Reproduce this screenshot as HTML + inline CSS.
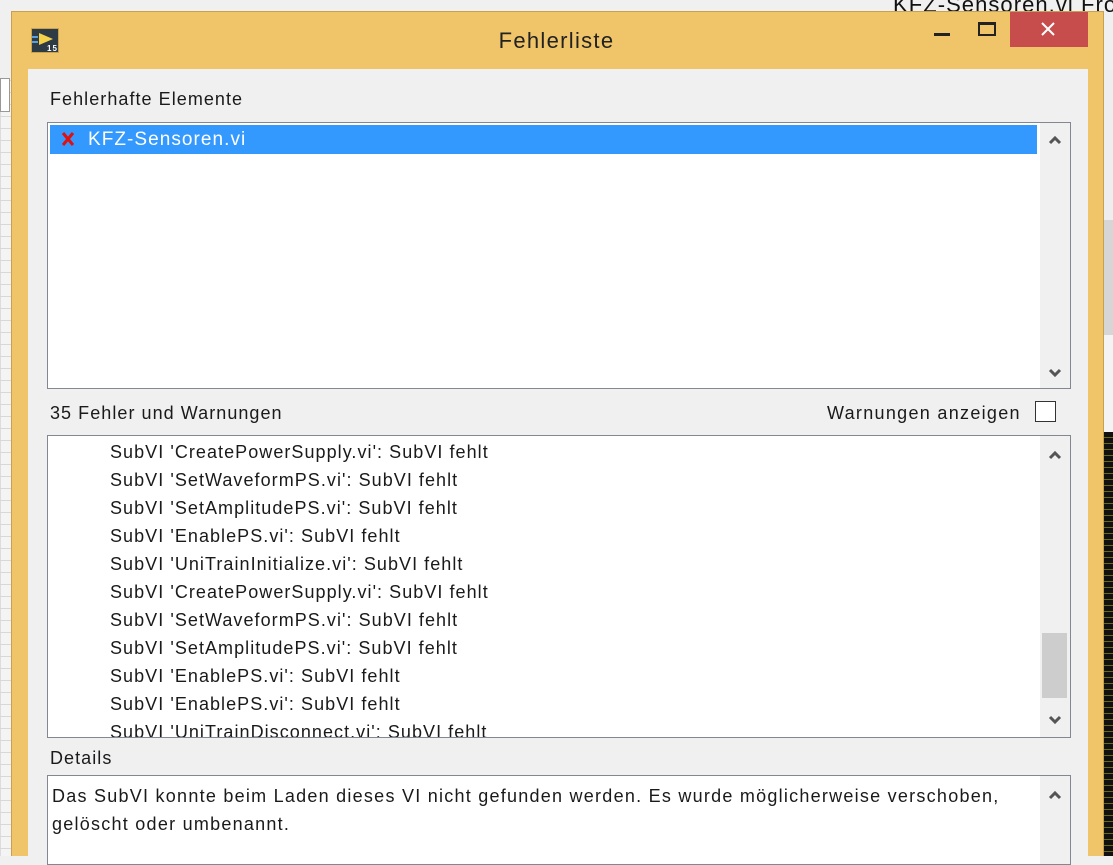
<!DOCTYPE html>
<html><head><style>
*{margin:0;padding:0;box-sizing:border-box}
body{width:1113px;height:856px;overflow:hidden;position:relative;background:#f0f0f0;font-family:"Segoe UI","Liberation Sans",sans-serif;color:#1a1a1a;letter-spacing:1.05px}
.abs{position:absolute}
.grid{background-color:#f4f4f4;background-image:linear-gradient(#d8d8d8 1px,transparent 1px),linear-gradient(90deg,#dcdcdc 1px,transparent 1px);background-size:12px 12px}
.box{position:absolute;background:#fff;border:1px solid #828790}
.sb{position:absolute;top:0;bottom:0;right:0;width:30px;background:#f0f0f0}
.chev{position:absolute;left:8px;width:14px;height:10px}
.row{position:absolute;left:62px;font-size:18px;white-space:nowrap;line-height:28px}
.lbl{position:absolute;font-size:18px;white-space:nowrap}
</style></head><body>
<div class="abs grid" style="left:0;top:80px;width:12px;height:776px"></div>
<div class="abs" style="left:0;top:78px;width:10px;height:34px;border:1px solid #999;background:#fff"></div>
<div class="abs" style="left:893px;top:-8px;font-size:22px;color:#111;white-space:nowrap">KFZ-Sensoren.vi Fro</div>
<div class="abs" style="left:1104px;top:70px;width:9px;height:150px;background:#eee"></div>
<div class="abs" style="left:1104px;top:220px;width:9px;height:115px;background:#d6d6d6"></div>
<div class="abs" style="left:1104px;top:335px;width:9px;height:97px;background:#f4f4f4"></div>
<div class="abs" style="left:1104px;top:432px;width:9px;height:424px;background:#111;background-image:repeating-linear-gradient(#111 0 5px,#6a6a10 5px 6px)"></div>
<!-- window -->
<div class="abs" style="left:11px;top:11px;width:1093px;height:845px;background:#f0c468;border:1px solid #c9a050;border-bottom:none"></div>
<div class="abs" style="left:31px;top:28px;width:28px;height:25px;background:#2e3a44;border:1px solid #c9a44a"></div>
<svg class="abs" style="left:31px;top:28px" width="28" height="25"><polygon points="8,5 22,11 8,17" fill="#f4d24a"/><rect x="1" y="8" width="6" height="2" fill="#5aa0e0"/><rect x="1" y="13" width="6" height="2" fill="#5aa0e0"/><text x="16" y="23" font-size="8" fill="#fff" font-family="Liberation Sans" font-weight="bold">15</text></svg>
<div class="abs" style="left:0;width:1113px;top:28px;text-align:center;font-size:22px;color:#222;letter-spacing:1.3px">Fehlerliste</div>
<div class="abs" style="left:934px;top:33px;width:16px;height:3px;background:#222"></div>
<div class="abs" style="left:978px;top:22px;width:18px;height:14px;border:2px solid #222;border-top-width:3px"></div>
<div class="abs" style="left:1010px;top:12px;width:78px;height:35px;background:#c74d4d"></div>
<svg class="abs" style="left:1041px;top:22px" width="14" height="14"><path d="M1 1L13 13M13 1L1 13" stroke="#fff" stroke-width="2"/></svg>
<!-- client -->
<div class="abs" style="left:28px;top:69px;width:1060px;height:787px;background:#f0f0f0"></div>
<div class="lbl" style="left:50px;top:89px">Fehlerhafte Elemente</div>
<div class="box" style="left:47px;top:122px;width:1024px;height:267px">
 <div class="abs" style="left:2px;top:2px;width:987px;height:29px;background:#3399ff"></div>
 <svg class="abs" style="left:13px;top:9px" width="14" height="14"><path d="M2 1L12 13M12 1L2 13" stroke="#e01010" stroke-width="3"/></svg>
 <div class="abs" style="left:40px;top:3px;font-size:19px;color:#fff;line-height:27px">KFZ-Sensoren.vi</div>
 <div class="sb"><svg class="chev" style="top:12px" viewBox="0 0 14 10"><path d="M2 8L7 3L12 8" stroke="#555" stroke-width="3" fill="none"/></svg><svg class="chev" style="bottom:10px" viewBox="0 0 14 10"><path d="M2 2L7 7L12 2" stroke="#555" stroke-width="3" fill="none"/></svg></div>
</div>
<div class="lbl" style="left:50px;top:403px">35 Fehler und Warnungen</div>
<div class="lbl" style="left:827px;top:403px;letter-spacing:1.3px">Warnungen anzeigen</div>
<div class="abs" style="left:1035px;top:401px;width:21px;height:21px;border:1px solid #333;background:#fff"></div>
<div class="box" style="left:47px;top:435px;width:1024px;height:303px;overflow:hidden">
 <div class="row" style="top:2px">SubVI 'CreatePowerSupply.vi': SubVI fehlt</div>
 <div class="row" style="top:30px">SubVI 'SetWaveformPS.vi': SubVI fehlt</div>
 <div class="row" style="top:58px">SubVI 'SetAmplitudePS.vi': SubVI fehlt</div>
 <div class="row" style="top:86px">SubVI 'EnablePS.vi': SubVI fehlt</div>
 <div class="row" style="top:114px">SubVI 'UniTrainInitialize.vi': SubVI fehlt</div>
 <div class="row" style="top:142px">SubVI 'CreatePowerSupply.vi': SubVI fehlt</div>
 <div class="row" style="top:170px">SubVI 'SetWaveformPS.vi': SubVI fehlt</div>
 <div class="row" style="top:198px">SubVI 'SetAmplitudePS.vi': SubVI fehlt</div>
 <div class="row" style="top:226px">SubVI 'EnablePS.vi': SubVI fehlt</div>
 <div class="row" style="top:254px">SubVI 'EnablePS.vi': SubVI fehlt</div>
 <div class="row" style="top:282px">SubVI 'UniTrainDisconnect.vi': SubVI fehlt</div>
 <div class="sb"><svg class="chev" style="top:14px" viewBox="0 0 14 10"><path d="M2 8L7 3L12 8" stroke="#555" stroke-width="3" fill="none"/></svg>
 <div class="abs" style="left:2px;top:197px;width:25px;height:65px;background:#cdcdcd"></div>
 <svg class="chev" style="bottom:12px" viewBox="0 0 14 10"><path d="M2 2L7 7L12 2" stroke="#555" stroke-width="3" fill="none"/></svg></div>
</div>
<div class="lbl" style="left:50px;top:748px">Details</div>
<div class="box" style="left:47px;top:775px;width:1024px;height:90px">
 <div class="abs" style="left:4px;top:6px;font-size:18px;line-height:28px;width:990px;letter-spacing:1.25px">Das SubVI konnte beim Laden dieses VI nicht gefunden werden. Es wurde möglicherweise verschoben, gelöscht oder umbenannt.</div>
 <div class="sb"><svg class="chev" style="top:14px" viewBox="0 0 14 10"><path d="M2 8L7 3L12 8" stroke="#555" stroke-width="3" fill="none"/></svg></div>
</div>
</body></html>
